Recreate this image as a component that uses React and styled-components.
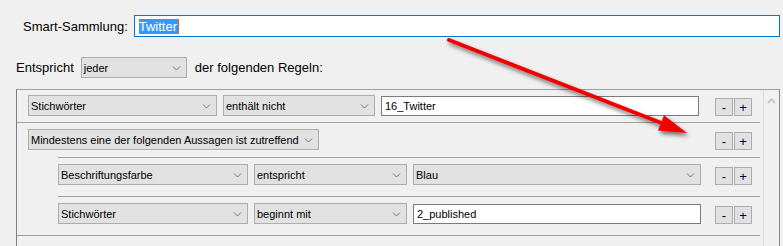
import React from "react";
import styled, { createGlobalStyle } from "styled-components";

const GlobalStyle = createGlobalStyle`
  body {
    margin: 0;
    background: #f0f0f0;
    font-family: "Liberation Sans", Arial, sans-serif;
  }
`;

function Chevron({ up }) {
  return (
    <svg width="9" height="6" viewBox="0 0 9 6">
      <path
        d={up ? "M1 5 L4.5 1.5 L8 5" : "M1 1.5 L4.5 5 L8 1.5"}
        fill="none"
        stroke={up ? "#c8c8c8" : "#777"}
        strokeWidth={up ? 2 : 1}
      />
    </svg>
  );
}

function Dropdown({ value, width }) {
  return (
    <Select width={width}>
      <span>{value}</span>
      <Chevron />
    </Select>
  );
}

function PlusMinus() {
  return (
    <Buttons>
      <SmallButton>-</SmallButton>
      <SmallButton>+</SmallButton>
    </Buttons>
  );
}

function Arrow() {
  return (
    <ArrowLayer width="783" height="246" viewBox="0 0 783 246">
      <defs>
        <filter id="shadow" x="-10%" y="-10%" width="130%" height="140%">
          <feDropShadow dx="2" dy="3" stdDeviation="2" floodColor="#000" floodOpacity="0.55" />
        </filter>
      </defs>
      <g filter="url(#shadow)">
        <line x1="449" y1="40" x2="664" y2="124" stroke="#f00000" strokeWidth="4" strokeLinecap="round" />
        <polygon points="687,133 658,130.5 664,115.3" fill="#f00000" />
      </g>
    </ArrowLayer>
  );
}

export default function App() {
  return (
    <>
      <GlobalStyle />
      <Page>
        <Header>
          <Label>Smart-Sammlung:</Label>
          <NameField>
            <Selected>Twitter</Selected>
          </NameField>
        </Header>
        <MatchRow>
          <Label>Entspricht</Label>
          <Dropdown value="jeder" width={106} />
          <Label>der folgenden Regeln:</Label>
        </MatchRow>
        <Panel>
          <RuleList>
            <Rule>
              <Fields>
                <Dropdown value="Stichwörter" width={189} />
                <Dropdown value="enthält nicht" width={152} />
                <TextField width={318}>16_Twitter</TextField>
              </Fields>
              <PlusMinus />
            </Rule>
            <Group>
              <Rule nested={false} last>
                <Fields>
                  <Dropdown value="Mindestens eine der folgenden Aussagen ist zutreffend" width={291} />
                </Fields>
                <PlusMinus />
              </Rule>
              <SubRule>
                <Fields>
                  <Dropdown value="Beschriftungsfarbe" width={190} />
                  <Dropdown value="entspricht" width={153} />
                  <Dropdown value="Blau" width={288} />
                </Fields>
                <PlusMinus />
              </SubRule>
              <SubRule>
                <Fields>
                  <Dropdown value="Stichwörter" width={190} />
                  <Dropdown value="beginnt mit" width={153} />
                  <TextField width={288}>2_published</TextField>
                </Fields>
                <PlusMinus />
              </SubRule>
            </Group>
          </RuleList>
          <ScrollColumn>
            <Chevron up />
          </ScrollColumn>
        </Panel>
        <Arrow />
      </Page>
    </>
  );
}

const Page = styled.div`
  position: relative;
  height: 246px;
  overflow: hidden;
`;

const Header = styled.div`
  display: flex;
  align-items: center;
  gap: 6px;
  padding: 15px 3px 0 23px;
`;

const Label = styled.span`
  font-size: 13px;
  color: #000;
  white-space: nowrap;
`;

const NameField = styled.div`
  flex: 1;
  height: 22px;
  box-sizing: border-box;
  border: 1px solid #0078d7;
  background: #fff;
  display: flex;
  align-items: center;
  padding-left: 4px;
`;

const Selected = styled.span`
  background: #3399ff;
  color: #fff;
  font-size: 13px;
  line-height: 15px;
  padding-right: 1px;
  border-right: 1px solid #d46a00;
`;

const MatchRow = styled.div`
  display: flex;
  align-items: center;
  gap: 7px;
  margin-top: 20px;
  padding-left: 16px;

  & > span:last-child {
    margin-left: 1px;
  }
`;

const Select = styled.div`
  width: ${({ width }) => width}px;
  height: 21px;
  box-sizing: border-box;
  flex-shrink: 0;
  border: 1px solid #adadad;
  background: #e1e1e1;
  display: flex;
  align-items: center;
  justify-content: space-between;
  padding: 0 5px 0 2px;
  font-size: 11px;
  color: #000;
  white-space: nowrap;
`;

const TextField = styled.div`
  width: ${({ width }) => width}px;
  height: 20px;
  box-sizing: border-box;
  flex-shrink: 0;
  margin-top: 1px;
  border: 1px solid #7a7a7a;
  background: #fff;
  display: flex;
  align-items: center;
  padding-left: 3px;
  font-size: 11px;
  color: #000;
`;

const Panel = styled.div`
  display: flex;
  margin: 11px 3px 0 16px;
  height: 160px;
  border-top: 1px solid #a0a0a0;
  border-left: 1px solid #7f7f7f;
  border-right: 1px solid #8a8a8a;
`;

const RuleList = styled.div`
  flex: 1;
  min-width: 0;
`;

const Rule = styled.div`
  display: flex;
  align-items: flex-start;
  margin-right: 3px;
  padding: ${({ last }) => (last ? "6px 8px 7px 11px" : "5px 8px 6px 11px")};
  border-bottom: ${({ last }) => (last ? "none" : "1px solid #a0a0a0")};
`;

const Group = styled.div`
  margin-right: 3px;
  border-bottom: 1px solid #a0a0a0;

  & > ${Rule} {
    margin-right: 0;
  }
`;

const SubRule = styled.div`
  display: flex;
  align-items: flex-start;
  margin-left: 41px;
  padding: 6px 8px 11px 0;
  border-top: 1px solid #a0a0a0;
`;

const Fields = styled.div`
  display: flex;
  gap: 6px;
`;

const Buttons = styled.div`
  display: flex;
  gap: 1px;
  margin: 3px 0 0 auto;
`;

const SmallButton = styled.div`
  width: 18px;
  height: 18px;
  box-sizing: border-box;
  border: 1px solid #adadad;
  background: #e1e1e1;
  display: flex;
  align-items: center;
  justify-content: center;
  font-size: 13px;
  color: #000030;
`;

const ScrollColumn = styled.div`
  width: 16px;
  flex-shrink: 0;
  border-left: 1px solid #dcdcdc;
  display: flex;
  justify-content: center;
  padding-top: 8px;
  box-sizing: border-box;
`;

const ArrowLayer = styled.svg`
  position: absolute;
  left: 0;
  top: 0;
  pointer-events: none;
`;
